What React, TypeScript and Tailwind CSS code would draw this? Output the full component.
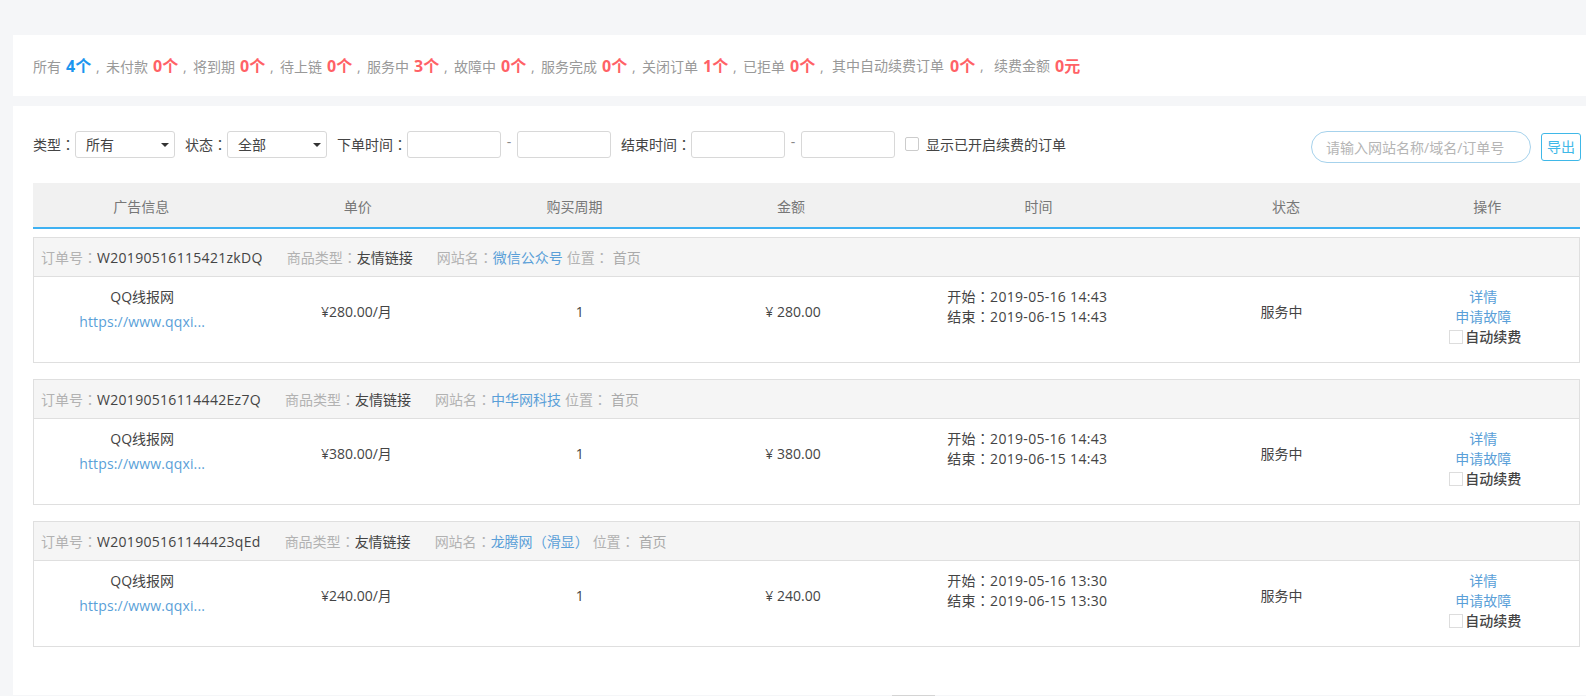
import type { ReactNode } from 'react'

const stats = [
  { label: '所有', value: '4个', blue: true },
  { label: '未付款', value: '0个' },
  { label: '将到期', value: '0个' },
  { label: '待上链', value: '0个' },
  { label: '服务中', value: '3个' },
  { label: '故障中', value: '0个' },
  { label: '服务完成', value: '0个' },
  { label: '关闭订单', value: '1个' },
  { label: '已拒单', value: '0个' },
]

const orders = [
  { no: 'W20190516115421zkDQ', site: <>微信公众号</>, price: '280.00', start: '2019-05-16 14:43', end: '2019-06-15 14:43' },
  { no: 'W20190516114442Ez7Q', site: <>中华网科技</>, price: '380.00', start: '2019-05-16 14:43', end: '2019-06-15 14:43' },
  {
    no: 'W201905161144423qEd',
    site: (
      <>
        龙腾网<Punct>（</Punct>滑显<Punct>）</Punct>
      </>
    ),
    price: '240.00',
    start: '2019-05-16 13:30',
    end: '2019-06-15 13:30',
  },
]

const heads = ['广告信息', '单价', '购买周期', '金额', '时间', '状态', '操作']
const cols = 'grid grid-cols-[14%_14%_14%_14%_18%_14%_12%]'

// the TC cut of Noto centres full-width punctuation, as the screenshot's font does
function Punct({ children }: { children: ReactNode }) {
  return <span className="[font-family:'Noto_Sans_CJK_TC',sans-serif]">{children}</span>
}

const Colon = () => <Punct>：</Punct>

function Select({ value }: { value: string }) {
  return (
    <div className="flex h-[27px] w-[100px] items-center justify-between rounded-[3px] border border-[#d8d8d8] bg-white pl-[10px] pr-[5px] text-[#444]">
      <span>{value}</span>
      <span className="h-0 w-0 border-x-[4px] border-t-[4px] border-x-transparent border-t-[#333]" />
    </div>
  )
}

function DateBox() {
  return <input className="h-[27px] w-[94px] rounded-[3px] border border-[#d8d8d8] bg-white" />
}

const Dash = () => <span className="w-4 text-center leading-[22px] text-[#888]">-</span>

function OrderRow({ order }: { order: (typeof orders)[number] }) {
  return (
    <div className="mb-4 h-[126px] border border-[#dfdfdf]">
      <div className="flex h-[39px] items-center border-b border-[#dfdfdf] bg-[#f5f5f5] pl-[7px] pt-px text-[#b2b2b2]">
        <span>订单号<Colon /></span>
        <span className="tracking-[0.3px] text-[#444]">{order.no}</span>
        <span className="ml-6">商品类型<Colon /></span>
        <span className="text-[#444]">友情链接</span>
        <span className="ml-6">网站名<Colon /></span>
        <span className="text-[#5a9fd8]">{order.site}</span>
        <span className="ml-[4px]">位置<Colon /></span>
        <span className="ml-1 text-[#aaa]">首页</span>
      </div>
      <div className={`${cols} pt-[10px] leading-5 text-[#444]`}>
        <div className="text-center">
          <div className="h-5">QQ线报网</div>
          <div className="mt-[5px] h-5 tracking-[0.15px] text-[#5a9fd8]">https://www.qqxi...</div>
        </div>
        <div className="pt-[15px] pr-1 text-center">¥{order.price}/月</div>
        <div className="pt-[15px] pl-2.5 text-center">1</div>
        <div className="pt-[15px] pl-1 text-center">¥ {order.price}</div>
        <div className="-mt-px pl-[48px] tracking-[0.3px]">
          <div className="h-5">开始<Colon />{order.start}</div>
          <div className="h-5">结束<Colon />{order.end}</div>
        </div>
        <div className="pt-[15px] pr-2 text-center">服务中</div>
        <div className="pr-[6px] text-center text-[#5a9fd8]">
          <div className="h-5">详情</div>
          <div className="h-5">申请故障</div>
          <div className="flex h-5 items-center justify-center pl-1 text-[#444]">
            <span className="mr-[2px] h-[14px] w-[14px] border border-[#ddd] bg-white" />
            <span className="font-medium">自动续费</span>
          </div>
        </div>
      </div>
    </div>
  )
}

export default function App() {
  return (
    <div className="relative h-[696px] w-[1586px] overflow-hidden bg-[#f5f6f8] pl-[13px] pt-[35px] text-sm [text-spacing-trim:space-all] [font-family:'Open_Sans','Noto_Sans_CJK_SC',sans-serif]">
      <section className="flex h-[61px] items-center bg-white pl-5 text-[#999]">
        {stats.map((s) => (
          <span key={s.label} className="flex items-baseline">
            <span>{s.label}</span>
            <span className={`ml-[5px] w-[26px] whitespace-nowrap text-base font-bold ${s.blue ? 'text-[#1c96ef]' : 'text-[#ff6166]'}`}>{s.value}</span>
            <span className="w-[14px] pl-[4px]">,</span>
          </span>
        ))}
        <span className="ml-[2px]">其中自动续费订单</span>
        <span className="ml-[6px] w-[26px] whitespace-nowrap text-base font-bold text-[#ff6166]">0个</span>
        <span className="w-[18px] pl-[4px]">,</span>
        <span>续费金额</span>
        <span className="ml-[5px] whitespace-nowrap text-base font-bold text-[#ff6166]">0元</span>
      </section>

      <section className="mt-[10px] h-[589px] bg-white pl-5 pt-[25px]">
        <div className="flex h-[32px] w-[1548px] items-start text-[#444]">
          <span className="leading-[27px]">类型<Colon /></span>
          <Select value="所有" />
          <span className="ml-[10px] leading-[27px]">状态<Colon /></span>
          <Select value="全部" />
          <span className="ml-[10px] leading-[27px]">下单时间<Colon /></span>
          <DateBox />
          <Dash />
          <DateBox />
          <span className="ml-[10px] leading-[27px]">结束时间<Colon /></span>
          <DateBox />
          <Dash />
          <DateBox />
          <span className="ml-[10px] mt-[6px] h-[14px] w-[14px] rounded-[2px] border border-[#ccc]" />
          <span className="ml-[7px] leading-[27px]">显示已开启续费的订单</span>
          <input
            placeholder="请输入网站名称/域名/订单号"
            className="ml-auto h-[32px] w-[220px] rounded-full border border-[#a6d2ec] pl-[14px] outline-none placeholder:text-[#b5b5b5]"
          />
          <button className="ml-[10px] mt-0.5 h-[28px] w-[40px] rounded-[3px] border border-[#3fb8e8] text-[#3fb8e8]">导出</button>
        </div>

        <div className={`${cols} mt-5 h-[46px] w-[1547px] items-center border-b-2 border-[#3fb1f2] bg-[#f1f1f1] pt-[3px] text-[#777]`}>
          {heads.map((h) => (
            <div key={h} className="text-center">{h}</div>
          ))}
        </div>

        <div className="mt-2 w-[1547px]">
          {orders.map((o) => (
            <OrderRow key={o.no} order={o} />
          ))}
        </div>
      </section>

      <div className="absolute bottom-0 left-[892px] h-px w-[43px] bg-[#d4d4d4]" />
    </div>
  )
}
